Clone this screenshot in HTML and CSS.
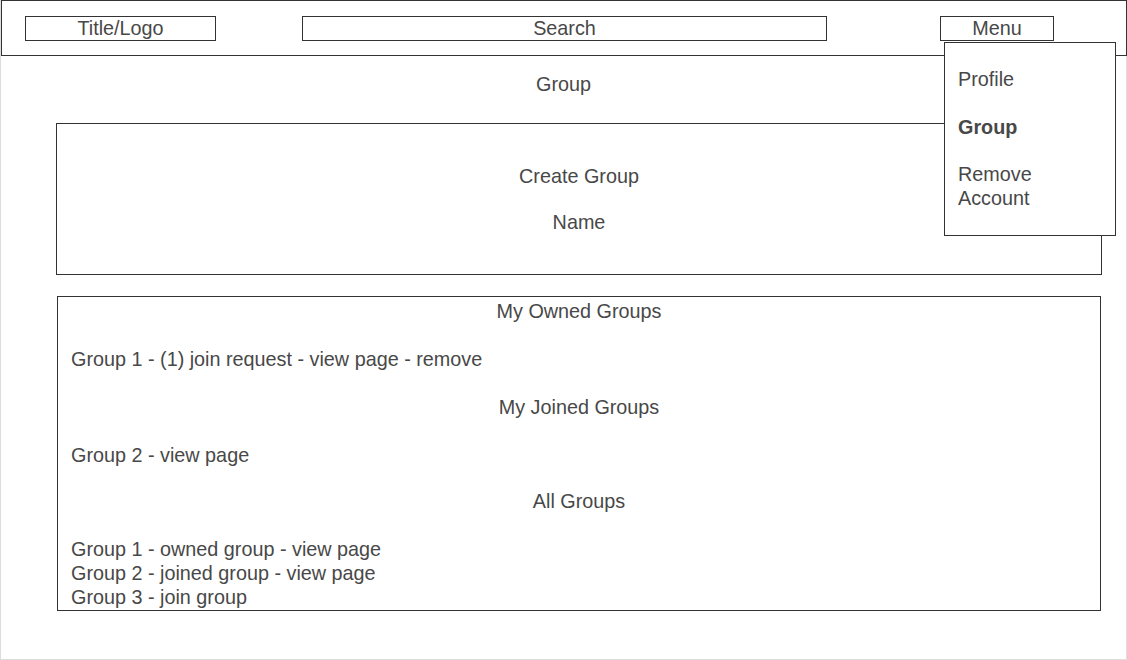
FILE: index.html
```html
<!DOCTYPE html>
<html lang="en">
<head>
    <meta charset="UTF-8">
    <meta name="viewport" content="width=device-width, initial-scale=1.0">
    <title>Group</title>
    <link rel="stylesheet" href="styles.css">
</head>
<body>
    <div class="page">
        <!-- Top bar -->
        <header class="topbar">
            <div class="bar-box title-box">Title/Logo</div>
            <div class="bar-box search-box">Search</div>
            <div class="bar-box menu-box">Menu</div>
        </header>

        <!-- Menu dropdown -->
        <div class="dropdown">
            <div class="dropdown-item">Profile</div>
            <div class="dropdown-item active">Group</div>
            <div class="dropdown-item">Remove<br>Account</div>
        </div>

        <h1 class="page-title">Group</h1>

        <!-- Create group -->
        <section class="create-box">
            <div class="create-title">Create Group</div>
            <div class="create-field">Name</div>
        </section>

        <!-- Group lists -->
        <section class="groups-box">
            <div class="section-title">My Owned Groups</div>
            <ul class="group-list">
                <li>Group 1 - (1) join request - view page - remove</li>
            </ul>

            <div class="section-title">My Joined Groups</div>
            <ul class="group-list joined">
                <li>Group 2 - view page</li>
            </ul>

            <div class="section-title">All Groups</div>
            <ul class="group-list last">
                <li>Group 1 - owned group - view page</li>
                <li>Group 2 - joined group - view page</li>
                <li>Group 3 - join group</li>
            </ul>
        </section>
    </div>
</body>
</html>
```

FILE: styles.css
```css
body {
    margin: 0;
    font-family: "Liberation Sans", Arial, sans-serif;
    font-size: 19.8px;
    line-height: 24px;
    color: #484848;
}
.page {
    position: relative;
    box-sizing: border-box;
    width: 1127px;
    height: 660px;
    border: 1px solid #ddd;
    border-top: none;
}
.topbar {
    display: flex;
    align-items: center;
    box-sizing: border-box;
    height: 56px;
    margin-right: -1px;
    padding-left: 23px;
    border: 1px solid #333;
}
.bar-box {
    box-sizing: border-box;
    height: 25px;
    line-height: 23px;
    border: 1px solid #333;
    text-align: center;
}
.title-box {
    width: 191px;
}
.search-box {
    width: 525px;
    margin-left: 86px;
}
.menu-box {
    width: 114px;
    margin-left: 113px;
}
.dropdown {
    position: absolute;
    z-index: 2;
    top: 42px;
    left: 943px;
    box-sizing: border-box;
    width: 172px;
    height: 194px;
    padding: 24px 13px;
    background: #fff;
    border: 1px solid #333;
}
.dropdown-item + .dropdown-item {
    margin-top: 24px;
}
.dropdown-item:last-child {
    margin-top: 23px;
}
.active {
    font-weight: bold;
}
.page-title {
    margin: 16px 0 27px;
    font-size: inherit;
    font-weight: normal;
    text-align: center;
}
.create-box {
    box-sizing: border-box;
    height: 152px;
    margin: 0 24px 0 55px;
    padding-top: 40px;
    border: 1px solid #333;
    text-align: center;
}
.create-field {
    margin-top: 22px;
}
.groups-box {
    box-sizing: border-box;
    height: 315px;
    margin: 21px 25px 0 56px;
    padding: 2px 13px 0;
    border: 1px solid #333;
}
.section-title {
    text-align: center;
}
.group-list {
    list-style: none;
    margin: 24px 0;
    padding: 0;
}
.group-list.joined {
    margin-bottom: 22px;
}
.group-list.last {
    margin-bottom: 0;
}
```
